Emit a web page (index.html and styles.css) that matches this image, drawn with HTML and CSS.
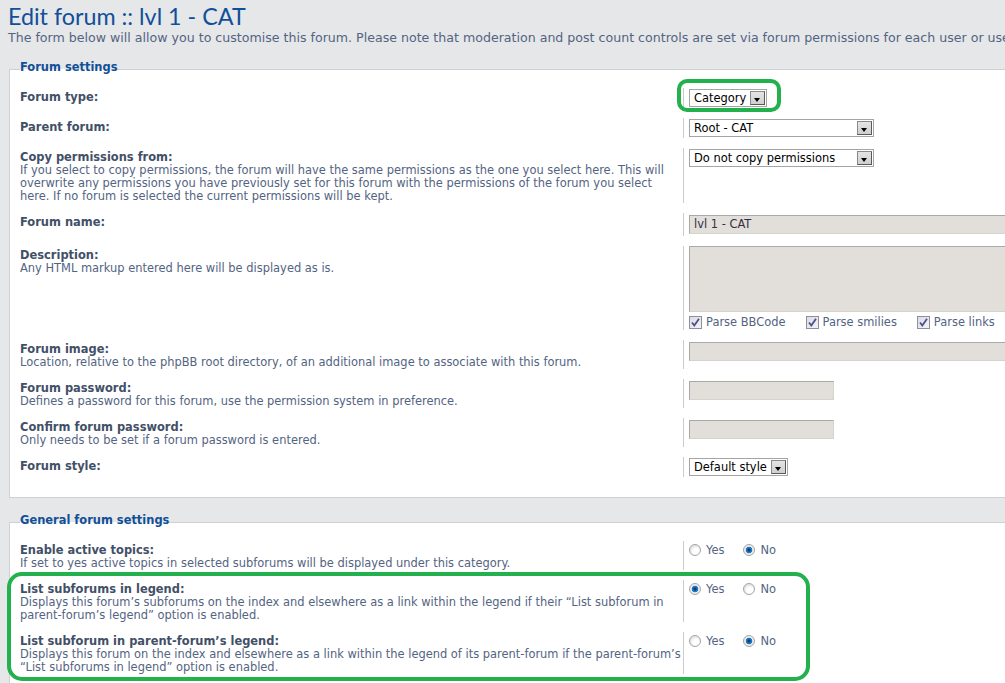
FILE: index.html
```html
<!DOCTYPE html>
<html lang="en">
<head>
<meta charset="utf-8">
<title>Edit forum</title>
<link rel="stylesheet" href="styles.css">
</head>
<body>
<div class="page">
  <h1>Edit forum :: lvl 1 - CAT</h1>
  <p class="intro">The form below will allow you to customise this forum. Please note that moderation and post count controls are set via forum permissions for each user or usergroup.</p>

  <fieldset class="fs fs-first">
    <legend>Forum settings</legend>

    <dl class="row">
      <dt><span class="lbl">Forum type:</span></dt>
      <dd><span class="select sel-cat"><span class="sel-text">Category</span><span class="sel-btn"></span></span></dd>
    </dl>

    <dl class="row">
      <dt><span class="lbl">Parent forum:</span></dt>
      <dd><span class="select sel-wide"><span class="sel-text">Root - CAT</span><span class="sel-btn"></span></span></dd>
    </dl>

    <dl class="row">
      <dt><span class="lbl">Copy permissions from:</span><span class="explain">If you select to copy permissions, the forum will have the same permissions as the one you select here. This will<br>overwrite any permissions you have previously set for this forum with the permissions of the forum you select<br>here. If no forum is selected the current permissions will be kept.</span></dt>
      <dd><span class="select sel-wide"><span class="sel-text">Do not copy permissions</span><span class="sel-btn"></span></span></dd>
    </dl>

    <dl class="row">
      <dt><span class="lbl">Forum name:</span></dt>
      <dd><span class="input input-full">lvl 1 - CAT</span></dd>
    </dl>

    <dl class="row">
      <dt><span class="lbl">Description:</span><span class="explain">Any HTML markup entered here will be displayed as is.</span></dt>
      <dd>
        <span class="textarea"></span>
        <span class="checks">
          <span class="check-item"><span class="checkbox"><svg viewBox="0 0 13 13" width="13" height="13"><path d="M3 6.5 L5.3 9.5 L10 2.8" fill="none" stroke="#4b4f8f" stroke-width="1.8"/></svg></span>Parse BBCode</span>
          <span class="check-item"><span class="checkbox"><svg viewBox="0 0 13 13" width="13" height="13"><path d="M3 6.5 L5.3 9.5 L10 2.8" fill="none" stroke="#4b4f8f" stroke-width="1.8"/></svg></span>Parse smilies</span>
          <span class="check-item"><span class="checkbox"><svg viewBox="0 0 13 13" width="13" height="13"><path d="M3 6.5 L5.3 9.5 L10 2.8" fill="none" stroke="#4b4f8f" stroke-width="1.8"/></svg></span>Parse links</span>
        </span>
      </dd>
    </dl>

    <dl class="row">
      <dt><span class="lbl">Forum image:</span><span class="explain">Location, relative to the phpBB root directory, of an additional image to associate with this forum.</span></dt>
      <dd><span class="input input-full"></span></dd>
    </dl>

    <dl class="row">
      <dt><span class="lbl">Forum password:</span><span class="explain">Defines a password for this forum, use the permission system in preference.</span></dt>
      <dd><span class="input input-short"></span></dd>
    </dl>

    <dl class="row">
      <dt><span class="lbl">Confirm forum password:</span><span class="explain">Only needs to be set if a forum password is entered.</span></dt>
      <dd><span class="input input-short"></span></dd>
    </dl>

    <dl class="row">
      <dt><span class="lbl">Forum style:</span></dt>
      <dd><span class="select sel-style"><span class="sel-text">Default style</span><span class="sel-btn"></span></span></dd>
    </dl>
  </fieldset>

  <fieldset class="fs fs-second">
    <legend>General forum settings</legend>

    <dl class="row">
      <dt><span class="lbl">Enable active topics:</span><span class="explain">If set to yes active topics in selected subforums will be displayed under this category.</span></dt>
      <dd><span class="radios"><span class="radio-item"><span class="radio"></span>Yes</span><span class="radio-item"><span class="radio on"></span>No</span></span></dd>
    </dl>

    <dl class="row">
      <dt><span class="lbl">List subforums in legend:</span><span class="explain">Displays this forum’s subforums on the index and elsewhere as a link within the legend if their “List subforum in<br>parent-forum’s legend” option is enabled.</span></dt>
      <dd><span class="radios"><span class="radio-item"><span class="radio on"></span>Yes</span><span class="radio-item"><span class="radio"></span>No</span></span></dd>
    </dl>

    <dl class="row">
      <dt><span class="lbl">List subforum in parent-forum’s legend:</span><span class="explain">Displays this forum on the index and elsewhere as a link within the legend of its parent-forum if the parent-forum’s<br>“List subforums in legend” option is enabled.</span></dt>
      <dd><span class="radios"><span class="radio-item"><span class="radio"></span>Yes</span><span class="radio-item"><span class="radio on"></span>No</span></span></dd>
    </dl>
  </fieldset>

  <div class="mark mark-type"></div>
  <div class="mark mark-legend"></div>
</div>
</body>
</html>
```

FILE: styles.css
```css
html, body {
  margin: 0;
  padding: 0;
  overflow: hidden;
}

body {
  background: #e6e7e9;
  font-family: "DejaVu Sans", Verdana, sans-serif;
  font-size: 11.45px;
  color: #536482;
}

.page {
  position: relative;
  padding: 0 0 0 8px;
  width: 1400px;
}

h1 {
  margin: 0;
  padding-top: 3px;
  font-family: "Lato", "DejaVu Sans", sans-serif;
  font-weight: normal;
  font-size: 23.3px;
  line-height: 26px;
  color: #115098;
}

.intro {
  margin: 2px 0 0;
  font-size: 12.6px;
  line-height: 13px;
  white-space: nowrap;
  color: #536482;
}

.fs {
  margin: 0 0 0 1px;
  padding: 10px 10px 10px 10px;
  border: 1px solid #d0d0d0;
  background: #ffffff;
  width: 1300px;
  box-sizing: border-box;
}

.fs-first {
  margin-top: 17px;
}

.fs-second {
  margin-top: 16px;
}

legend {
  padding: 0 0 4px;
  font-weight: bold;
  line-height: 13px;
  color: #115098;
}

.row {
  display: grid;
  grid-template-columns: 663px 1fr;
  margin: 0 0 10px;
}

dt {
  padding-top: 3px;
  line-height: 13px;
}

.lbl {
  display: block;
  font-weight: bold;
  color: #425067;
  white-space: nowrap;
}

.explain {
  display: block;
  color: #536482;
  white-space: nowrap;
}

dd {
  margin: 0;
  padding-left: 5px;
  border-left: 1px solid #cccccc;
}

/* select boxes */
.select {
  display: flex;
  align-items: center;
  justify-content: space-between;
  box-sizing: border-box;
  height: 18px;
  margin: 1px 0;
  padding: 1px 1px 1px 4px;
  border: 1px solid #a5a5a5;
  background: #ffffff;
  color: #000000;
  line-height: 14px;
  white-space: nowrap;
}

.sel-cat { width: 78px; }
.sel-wide { width: 185px; }
.sel-style { width: 99px; }

.sel-btn {
  position: relative;
  flex: none;
  width: 15px;
  height: 14px;
  box-sizing: border-box;
  border: 1px solid;
  border-color: #8a8a8a #5a5a5a #5a5a5a #8a8a8a;
  background: linear-gradient(#e4e4e4, #cfcfcf);
}

.sel-btn::after {
  content: "";
  position: absolute;
  left: 3px;
  top: 6px;
  border-left: 3.5px solid transparent;
  border-right: 3.5px solid transparent;
  border-top: 4px solid #000000;
}

/* text inputs */
.input {
  display: block;
  box-sizing: border-box;
  height: 19px;
  margin: 2px 0;
  padding: 2px 4px;
  border: 1px solid;
  border-color: #a9a9a9 #d6d3cc #d6d3cc #a9a9a9;
  background: #e2dfda;
  color: #332f3f;
  line-height: 13px;
}

.input-full { width: 600px; }
.input-short { width: 145px; }

.textarea {
  display: block;
  box-sizing: border-box;
  width: 600px;
  height: 66px;
  border: 1px solid;
  border-color: #a9a9a9 #d6d3cc #d6d3cc #a9a9a9;
  background: #e2dfda;
}

.checks {
  display: flex;
  gap: 20px;
  margin-top: 2px;
  line-height: 16px;
  color: #536482;
}

.check-item {
  display: flex;
  align-items: center;
  gap: 4px;
}

.checkbox {
  display: block;
  width: 13px;
  height: 13px;
  box-sizing: border-box;
  border: 1px solid #8f8f9a;
  background: linear-gradient(135deg, #dcdce4, #f2f2f6);
  overflow: hidden;
}

.checkbox svg {
  display: block;
  margin: -1px 0 0 -1px;
}

/* radios */
.radios {
  display: flex;
  gap: 19px;
  padding-top: 3px;
  line-height: 12px;
  color: #536482;
}

.radio-item {
  display: flex;
  align-items: center;
  gap: 5px;
}

.radio {
  display: block;
  width: 12px;
  height: 12px;
  box-sizing: border-box;
  border-radius: 50%;
  border: 1px solid #a4a4a4;
  background: radial-gradient(circle at 60% 65%, #ffffff 0 3px, #e4e4e4 6px);
}

.radio.on {
  background: radial-gradient(circle at 50% 50%, #0d3f73 0 1.2px, #1d79c8 2px 3px, #e8e8e8 3.6px, #f6f6f6 6px);
}

/* green annotation frames */
.mark {
  position: absolute;
  box-sizing: border-box;
  border: 4px solid #22b14c;
}

.mark-type {
  left: 677px;
  top: 79px;
  width: 104px;
  height: 33px;
  border-radius: 10px;
}

.mark-legend {
  left: 7px;
  top: 572px;
  width: 803px;
  height: 109px;
  border-radius: 15px;
}
```
